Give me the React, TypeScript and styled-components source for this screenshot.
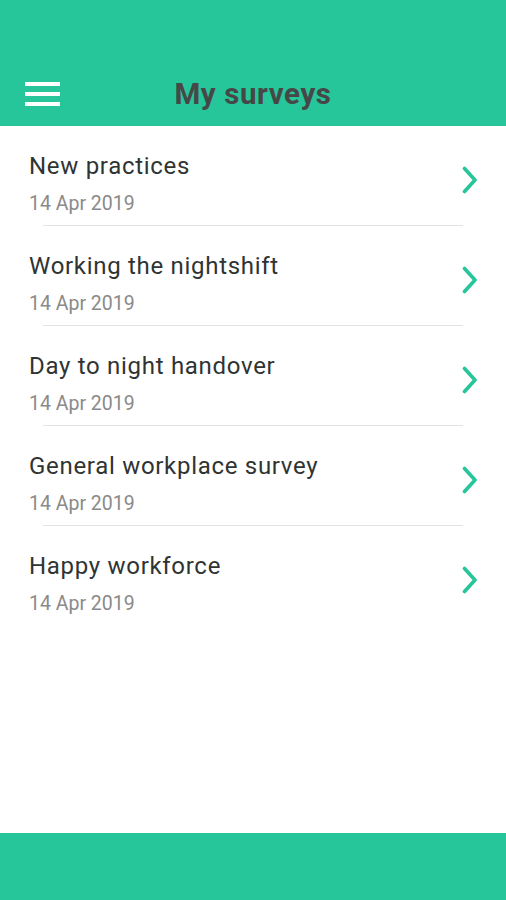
import styled, { createGlobalStyle } from "styled-components";

const GlobalStyle = createGlobalStyle`
  html, body {
    margin: 0;
    padding: 0;
    background: #ffffff;
  }
  body {
    font-family: Roboto, "Noto Sans", "Liberation Sans", sans-serif;
  }
`;

const brand = "#26c59a";

const surveys = [
  { title: "New practices", date: "14 Apr 2019" },
  { title: "Working the nightshift", date: "14 Apr 2019" },
  { title: "Day to night handover", date: "14 Apr 2019" },
  { title: "General workplace survey", date: "14 Apr 2019" },
  { title: "Happy workforce", date: "14 Apr 2019" },
];

const Screen = styled.div`
  display: flex;
  flex-direction: column;
  height: 900px;
  width: 100%;
`;

const Header = styled.header`
  background-color: ${brand};
  padding-top: 62px;
  height: 126px;
  box-sizing: border-box;
`;

const HeaderBar = styled.div`
  position: relative;
  display: flex;
  align-items: center;
  justify-content: center;
  height: 64px;
`;

const MenuButton = styled.button`
  position: absolute;
  left: 25px;
  top: 50%;
  transform: translateY(-50%);
  display: flex;
  flex-direction: column;
  gap: 6px;
  padding: 0;
  border: none;
  background: none;
  cursor: pointer;
`;

const MenuLine = styled.span`
  display: block;
  width: 35px;
  height: 4px;
  background-color: #ffffff;
`;

const Title = styled.h1`
  margin: 0;
  font-size: 29.5px;
  font-weight: 700;
  color: #474747;
  letter-spacing: 0.6px;
`;

const List = styled.ul`
  flex: 1;
  list-style: none;
  margin: 0;
  padding: 0;
`;

const Item = styled.li`
  display: flex;
  flex-direction: column;
`;

const ItemRow = styled.div`
  display: flex;
  align-items: flex-start;
  height: 99px;
  padding: 25px 29px 0;
  box-sizing: border-box;
`;

const ItemText = styled.div`
  flex: 1;
  display: flex;
  flex-direction: column;
`;

const ItemTitle = styled.span`
  font-size: 24px;
  line-height: 30px;
  letter-spacing: 0.7px;
  color: #2f3433;
`;

const ItemDate = styled.span`
  margin-top: 11px;
  font-size: 19.5px;
  line-height: 24px;
  color: #8a8a8a;
`;

const Chevron = styled.svg`
  width: 16px;
  height: 28px;
  margin-top: 15px;
  margin-right: -1px;
`;

const Divider = styled.div<{ $hidden?: boolean }>`
  height: 1px;
  margin: 0 43px;
  background-color: ${(p) => (p.$hidden ? "transparent" : "#e3e3e3")};
`;

const Footer = styled.footer`
  height: 67px;
  background-color: ${brand};
`;

export default function App() {
  return (
    <Screen>
      <GlobalStyle />
      <Header>
        <HeaderBar>
          <MenuButton aria-label="Menu">
            <MenuLine />
            <MenuLine />
            <MenuLine />
          </MenuButton>
          <Title>My surveys</Title>
        </HeaderBar>
      </Header>
      <List>
        {surveys.map((s, i) => (
          <Item key={s.title}>
            <ItemRow>
              <ItemText>
                <ItemTitle>{s.title}</ItemTitle>
                <ItemDate>{s.date}</ItemDate>
              </ItemText>
              <Chevron viewBox="0 0 16 28" fill="none">
                <path
                  d="M2.5 2.5 L13 14 L2.5 25.5"
                  stroke={brand}
                  strokeWidth="3.6"
                  strokeLinecap="round"
                  strokeLinejoin="round"
                />
              </Chevron>
            </ItemRow>
            <Divider $hidden={i === surveys.length - 1} />
          </Item>
        ))}
      </List>
      <Footer />
    </Screen>
  );
}
